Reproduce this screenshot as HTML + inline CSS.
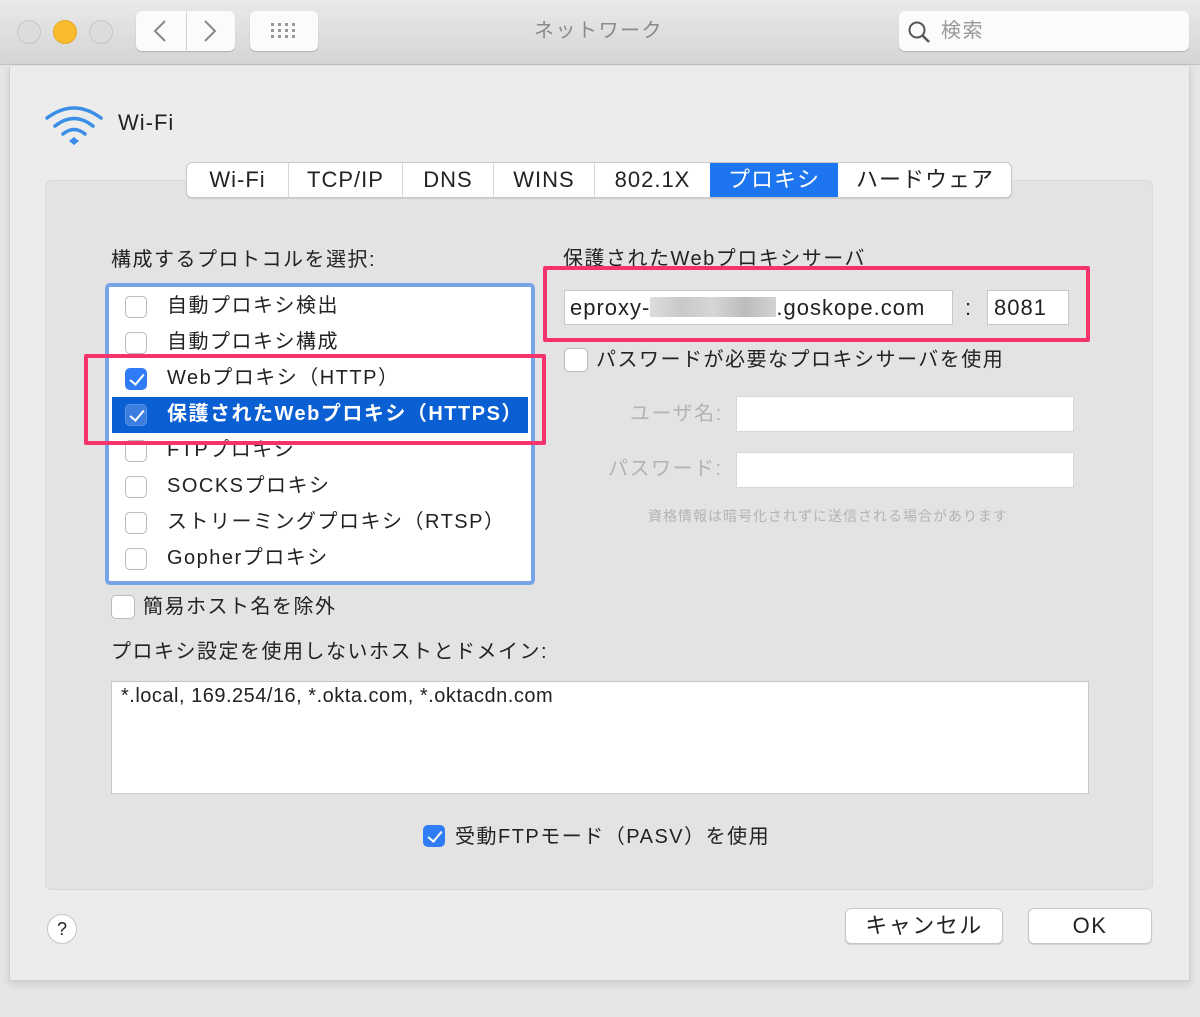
<!DOCTYPE html>
<html><head><meta charset="utf-8"><style>
*{margin:0;padding:0;box-sizing:border-box}
body{width:1200px;height:1017px;background:#e6e6e6;font-family:"Liberation Sans","Noto Sans CJK JP",sans-serif;color:#222;position:relative;overflow:hidden}
.a{position:absolute}
.t{position:absolute;white-space:nowrap;font-size:20px;line-height:24px;letter-spacing:1.5px}
.cb{position:absolute;width:22px;height:22px;border:1px solid #bbb;border-radius:5px;background:#fff}
.cbon{background:#2f7cf6;border-color:#2f7cf6}
.cbon::after{content:"";position:absolute;left:7px;top:2px;width:6px;height:12px;border:solid #fff;border-width:0 2.5px 2.5px 0;transform:rotate(40deg)}
.fld{position:absolute;background:#fff;border:1px solid #c8c8c8}
.btn{position:absolute;background:#fff;border:1px solid #c6c6c6;border-radius:6px;box-shadow:0 1px 1px rgba(0,0,0,.12);font-size:22px;text-align:center;line-height:34px;letter-spacing:1.5px}
</style></head><body>
<div class="a" style="left:0;top:0;width:1200px;height:65px;background:linear-gradient(#e9e9e9,#d5d5d5);border-bottom:1px solid #c2c2c2"></div>
<div class="a" style="left:17px;top:20px;width:24px;height:24px;border-radius:50%;background:#dcdcdc;border:1px solid #c6c6c6"></div>
<div class="a" style="left:53px;top:20px;width:24px;height:24px;border-radius:50%;background:#f8bc2e;border:1px solid #e6a81f"></div>
<div class="a" style="left:89px;top:20px;width:24px;height:24px;border-radius:50%;background:#dcdcdc;border:1px solid #c6c6c6"></div>
<div class="a" style="left:136px;top:11px;width:50px;height:40px;background:#fbfbfb;border-radius:6px 0 0 6px;box-shadow:0 1px 1px rgba(0,0,0,.2)"></div>
<div class="a" style="left:187px;top:11px;width:48px;height:40px;background:#fbfbfb;border-radius:0 6px 6px 0;box-shadow:0 1px 1px rgba(0,0,0,.2)"></div>
<svg class="a" style="left:136px;top:11px" width="100" height="40"><path d="M29 10 L19 20 L29 30 M69 10 L79 20 L69 30" fill="none" stroke="#888" stroke-width="2"/></svg>
<div class="a" style="left:250px;top:11px;width:68px;height:40px;background:#fbfbfb;border-radius:6px;box-shadow:0 1px 1px rgba(0,0,0,.2)"></div>
<svg class="a" style="left:270px;top:22px" width="28" height="18"><g fill="#999"><rect x="1" y="1" width="3" height="3"/><rect x="8" y="1" width="3" height="3"/><rect x="15" y="1" width="3" height="3"/><rect x="22" y="1" width="3" height="3"/><rect x="1" y="7" width="3" height="3"/><rect x="8" y="7" width="3" height="3"/><rect x="15" y="7" width="3" height="3"/><rect x="22" y="7" width="3" height="3"/><rect x="1" y="13" width="3" height="3"/><rect x="8" y="13" width="3" height="3"/><rect x="15" y="13" width="3" height="3"/><rect x="22" y="13" width="3" height="3"/></g></svg>
<div class="t" style="left:534px;top:19px;color:#8a8a8a;font-size:20px">ネットワーク</div>
<div class="a" style="left:899px;top:11px;width:290px;height:40px;background:#fbfbfb;border-radius:6px;box-shadow:0 1px 1px rgba(0,0,0,.2)"></div>
<svg class="a" style="left:907px;top:20px" width="26" height="26"><circle cx="10" cy="10" r="7.5" fill="none" stroke="#555" stroke-width="2"/><path d="M15.5 15.5 L22 22" stroke="#555" stroke-width="2.5"/></svg>
<div class="t" style="left:941px;top:19px;color:#999">検索</div>

<div class="a" style="left:9px;top:66px;width:1181px;height:915px;background:#ececec;border:1px solid #d0d0d0;border-top:none;box-shadow:0 3px 8px rgba(0,0,0,.12)"></div>
<svg class="a" style="left:44px;top:102px" width="60" height="44"><g fill="none" stroke="#3a8ee8" stroke-width="3.5" stroke-linecap="round"><path d="M3 16 Q30 -4 57 16"/><path d="M11 24 Q30 9 49 24"/><path d="M19 32 Q30 23 41 32"/></g><path d="M25 39 L30 35 L35 39 L30 43Z" fill="#3a8ee8"/></svg>
<div class="t" style="left:118px;top:111px;font-size:22px;letter-spacing:1px">Wi-Fi</div>

<div class="a" style="left:45px;top:180px;width:1108px;height:710px;background:#e3e3e3;border-radius:6px;border:1px solid #dadada"></div>
<div class="a" style="left:186px;top:162px;width:826px;height:36px;background:#fff;border:1px solid #c8c8c8;border-radius:6px;box-shadow:0 1px 1px rgba(0,0,0,.1);overflow:hidden;font-size:22px;line-height:34px;letter-spacing:1px">
<span class="a" style="left:0;width:102px;text-align:center;border-right:1px solid #d8d8d8;height:34px">Wi-Fi</span>
<span class="a" style="left:102px;width:114px;text-align:center;border-right:1px solid #d8d8d8;height:34px">TCP/IP</span>
<span class="a" style="left:216px;width:91px;text-align:center;border-right:1px solid #d8d8d8;height:34px">DNS</span>
<span class="a" style="left:307px;width:101px;text-align:center;border-right:1px solid #d8d8d8;height:34px">WINS</span>
<span class="a" style="left:408px;width:115px;text-align:center;height:34px">802.1X</span>
<span class="a" style="left:523px;width:128px;text-align:center;background:#1d76ef;color:#fff;height:34px">プロキシ</span>
<span class="a" style="left:651px;width:174px;text-align:center;height:34px">ハードウェア</span>
</div>

<div class="t" style="left:111px;top:248px">構成するプロトコルを選択:</div>
<div class="a" style="left:105px;top:283px;width:430px;height:302px;border:4px solid #76a4e6;border-radius:5px;background:#fff"></div>
<div class="a" style="left:112px;top:397px;width:416px;height:36px;background:#0a5fd2"></div>
<div class="cb" style="left:125px;top:296px"></div><div class="t" style="left:167px;top:294px">自動プロキシ検出</div>
<div class="cb" style="left:125px;top:332px"></div><div class="t" style="left:167px;top:330px">自動プロキシ構成</div>
<div class="cb cbon" style="left:125px;top:368px"></div><div class="t" style="left:167px;top:366px">Webプロキシ（HTTP）</div>
<div class="cb cbon" style="left:125px;top:404px;background:#3b7ee0;border-color:#5a92e6"></div><div class="t" style="left:167px;top:402px;color:#fff;font-weight:bold">保護されたWebプロキシ（HTTPS）</div>
<div class="cb" style="left:125px;top:440px"></div><div class="t" style="left:167px;top:438px">FTPプロキシ</div>
<div class="cb" style="left:125px;top:476px"></div><div class="t" style="left:167px;top:474px">SOCKSプロキシ</div>
<div class="cb" style="left:125px;top:512px"></div><div class="t" style="left:167px;top:510px">ストリーミングプロキシ（RTSP）</div>
<div class="cb" style="left:125px;top:548px"></div><div class="t" style="left:167px;top:546px">Gopherプロキシ</div>
<div class="a" style="left:84px;top:354px;width:462px;height:91px;border:4px solid #f5336b;border-radius:2px;background:transparent"></div>

<div class="cb" style="left:111px;top:595px;width:24px;height:24px"></div>
<div class="t" style="left:143px;top:595px">簡易ホスト名を除外</div>
<div class="t" style="left:111px;top:640px">プロキシ設定を使用しないホストとドメイン:</div>
<div class="fld" style="left:111px;top:681px;width:978px;height:113px"></div>
<div class="t" style="left:121px;top:684px;letter-spacing:.5px">*.local, 169.254/16, *.okta.com, *.oktacdn.com</div>
<div class="cb cbon" style="left:423px;top:825px"></div>
<div class="t" style="left:455px;top:825px">受動FTPモード（PASV）を使用</div>

<div class="t" style="left:563px;top:247px">保護されたWebプロキシサーバ</div>
<div class="fld" style="left:564px;top:290px;width:389px;height:35px"></div>
<div class="t" style="left:570px;top:296px;font-size:22px;letter-spacing:1px">eproxy-<span style="display:inline-block;width:126px;height:20px;background:linear-gradient(90deg,#ddd,#c9c9c9,#d6d6d6,#bcbcbc,#d2d2d2);vertical-align:-2px"></span>.goskope.com</div>
<div class="t" style="left:965px;top:296px;font-size:22px">:</div>
<div class="fld" style="left:987px;top:290px;width:82px;height:35px"></div>
<div class="t" style="left:994px;top:296px;font-size:22px;letter-spacing:1px">8081</div>
<div class="a" style="left:543px;top:266px;width:547px;height:76px;border:4px solid #f5336b;border-radius:2px"></div>
<div class="cb" style="left:564px;top:348px;width:24px;height:24px"></div>
<div class="t" style="left:596px;top:348px">パスワードが必要なプロキシサーバを使用</div>
<div class="t" style="left:630px;top:402px;color:#b3b3b3">ユーザ名:</div>
<div class="fld" style="left:736px;top:396px;width:338px;height:36px;border-color:#d8d8d8"></div>
<div class="t" style="left:608px;top:457px;color:#b3b3b3">パスワード:</div>
<div class="fld" style="left:736px;top:452px;width:338px;height:36px;border-color:#d8d8d8"></div>
<div class="t" style="left:648px;top:504px;font-size:14px;color:#b3b3b3;letter-spacing:1px">資格情報は暗号化されずに送信される場合があります</div>

<div class="a" style="left:47px;top:914px;width:30px;height:30px;border-radius:50%;background:#fff;border:1px solid #c4c4c4;text-align:center;line-height:28px;font-size:18px">?</div>
<div class="btn" style="left:845px;top:908px;width:158px;height:36px">キャンセル</div>
<div class="btn" style="left:1028px;top:908px;width:124px;height:36px">OK</div>
</body></html>
